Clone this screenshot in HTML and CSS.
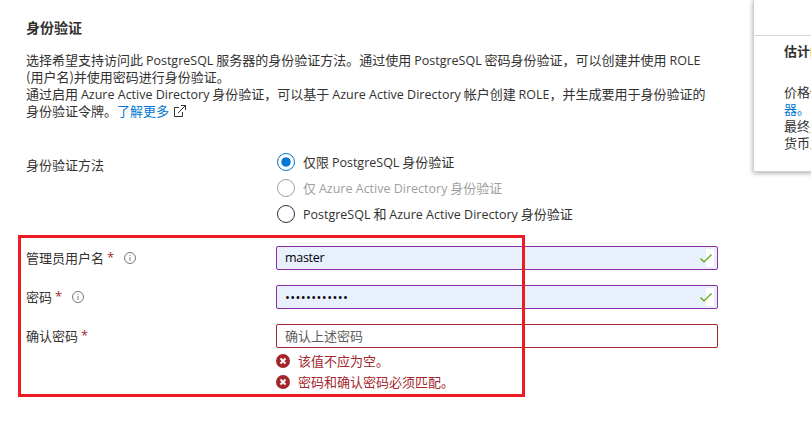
FILE: index.html
```html
<!DOCTYPE html>
<html lang="zh-CN">
<head>
<meta charset="utf-8">
<title>身份验证</title>
<link rel="stylesheet" href="styles.css">
</head>
<body>
<div class="page">
  <main class="main">
    <h2 class="title">身份验证</h2>
    <p class="intro">选择希望支持访问此 <span class="en">PostgreSQL</span> 服务器的身份验证方法。通过使用 <span class="en">PostgreSQL</span> 密码身份验证，可以创建并使用 <span class="en">ROLE</span><br>(用户名)并使用密码进行身份验证。<br>通过启用 <span class="en">Azure Active Directory</span> 身份验证，可以基于 <span class="en">Azure Active Directory</span> 帐户创建 <span class="en">ROLE</span>，并生成要用于身份验证的<br>身份验证令牌。<a class="link">了解更多</a><svg class="external" viewBox="0 0 12 12"><path d="M5 2.5H.5v9h8V7M7 .5h4.5V5M11.5.5L4 8"/></svg></p>

    <div class="row methods">
      <div class="label">身份验证方法</div>
      <div class="radios">
        <div class="radio selected"><i class="circle"></i><span class="option">仅限 <span class="en">PostgreSQL</span> 身份验证</span></div>
        <div class="radio disabled"><i class="circle"></i><span class="option">仅 <span class="en">Azure Active Directory</span> 身份验证</span></div>
        <div class="radio"><i class="circle"></i><span class="option"><span class="en">PostgreSQL</span> 和 <span class="en">Azure Active Directory</span> 身份验证</span></div>
      </div>
    </div>

    <div class="row field">
      <div class="label">管理员用户名<b class="star">*</b><svg class="info" viewBox="0 0 12 12"><circle cx="6" cy="6" r="5.5"/><path d="M6 5v4M6 3v1"/></svg></div>
      <div class="input filled"><span class="en value">master</span><span class="ok"><svg viewBox="0 0 12 9"><path d="M.5 4.5l3.5 3.5L11.5.5"/></svg></span></div>
    </div>
    <div class="row field">
      <div class="label">密码<b class="star">*</b><svg class="info" viewBox="0 0 12 12"><circle cx="6" cy="6" r="5.5"/><path d="M6 5v4M6 3v1"/></svg></div>
      <div class="input filled"><span class="dots">••••••••••••</span><span class="ok"><svg viewBox="0 0 12 9"><path d="M.5 4.5l3.5 3.5L11.5.5"/></svg></span></div>
    </div>
    <div class="row field">
      <div class="label">确认密码<b class="star">*</b></div>
      <div class="control">
        <div class="input invalid">确认上述密码</div>
        <div class="error"><svg viewBox="0 0 14 14"><circle cx="7" cy="7" r="7"/><path d="M4.5 4.5l5 5M9.5 4.5l-5 5"/></svg>该值不应为空。</div>
        <div class="error"><svg viewBox="0 0 14 14"><circle cx="7" cy="7" r="7"/><path d="M4.5 4.5l5 5M9.5 4.5l-5 5"/></svg>密码和确认密码必须匹配。</div>
      </div>
    </div>
  </main>
  <aside class="panel">
    <div class="panel-top"></div>
    <h3 class="panel-title">估计的</h3>
    <p class="panel-text">价格估<br><a class="link">器。</a><br>最终费<br>货币显</p>
  </aside>
  <div class="highlight"></div>
</div>
</body>
</html>
```
FILE: styles.css
```css
* { box-sizing: border-box; }
body {
  margin: 0;
  background: #fff;
  color: #323130;
  font: 13px/17px "Noto Sans CJK SC", sans-serif;
}
.page {
  position: relative;
  display: flex;
  align-items: flex-start;
  width: 811px;
  height: 427px;
  overflow: hidden;
  white-space: nowrap;
}
.main {
  flex: none;
  width: 753px;
  padding: 17px 0 0 26px;
}
.en {
  font-family: "Open Sans", sans-serif;
  font-size: 12.5px;
  line-height: 1;
}
.title { margin: 0; font-size: 14px; line-height: 20px; font-weight: 700; }
.intro { height: 68px; margin: 14px 0 0; }
.link { color: #0078d4; }
.external { width: 12px; height: 12px; margin-left: 5px; vertical-align: -1px; }
.external path { fill: none; stroke: #323130; }
.row { display: flex; align-items: flex-start; }
.label { flex: none; display: flex; align-items: center; width: 250px; height: 24px; padding-bottom: 2px; }
.methods { margin-top: 30px; }
.methods .label { height: 32px; }
.radio { display: flex; align-items: center; gap: 8px; height: 26px; }
.option { padding-bottom: 2px; }
.circle {
  display: block;
  width: 18px;
  height: 18px;
  margin-left: 1px;
  border: 1px solid #323130;
  border-radius: 50%;
}
.selected .circle {
  border-color: #0078d4;
  background: radial-gradient(circle, #0078d4 4.3px, transparent 5px);
}
.disabled { color: #a19f9d; }
.disabled .circle { border-color: #a19f9d; }
.methods + .field { margin-top: 19px; }
.field { margin-bottom: 15px; }
.star { color: #a4262c; font: 13px/17px "Open Sans", sans-serif; margin-left: 3px; }
.info { width: 12px; height: 12px; margin: 2px 0 0 10px; }
.info circle, .info path { fill: none; stroke: #6b6967; stroke-width: .9; }
.input {
  display: flex;
  align-items: center;
  width: 442px;
  height: 24px;
  padding: 0 3px 0 8px;
  border: 1px solid #881798;
  border-radius: 2px;
}
.filled { justify-content: space-between; background: #e8f0fe; color: #000; border-color: #8a2da5; }
.value { line-height: 20px; letter-spacing: -.3px; }
.dots { font: 13px/20px "Open Sans", sans-serif; letter-spacing: .38px; }
.ok {
  display: flex;
  align-items: center;
  width: 14px;
  height: 18px;
  background: linear-gradient(to right, transparent 6px, #fff 6px);
}
.ok svg { width: 12px; height: 9px; }
.ok path { fill: none; stroke: #57a300; stroke-width: 1.2; }
.invalid { padding-bottom: 2px; border-color: #a4262c; color: #605e5c; }
.error { display: flex; align-items: center; gap: 8px; height: 21px; color: #a4262c; }
.invalid + .error { margin-top: 2px; }
.error svg { width: 14px; height: 14px; }
.error circle { fill: #a4262c; }
.error path { stroke: #fff; stroke-width: 2; }
.panel {
  flex: none;
  width: 300px;
  height: 172px;
  border: solid #d2d0ce;
  border-width: 0 0 1px 1px;
  box-shadow: 0 1px 5px rgba(0, 0, 0, .35);
}
.panel-top { height: 36px; border-bottom: 1px solid #d6d6d6; }
.panel-title { margin: 6px 0 0 30px; font-size: 13px; line-height: 17px; }
.panel-text { margin: 24px 0 0 30px; }
.highlight {
  position: absolute;
  left: 18px;
  top: 235px;
  width: 507px;
  height: 162px;
  border: 3px solid #ed1c24;
}
```
